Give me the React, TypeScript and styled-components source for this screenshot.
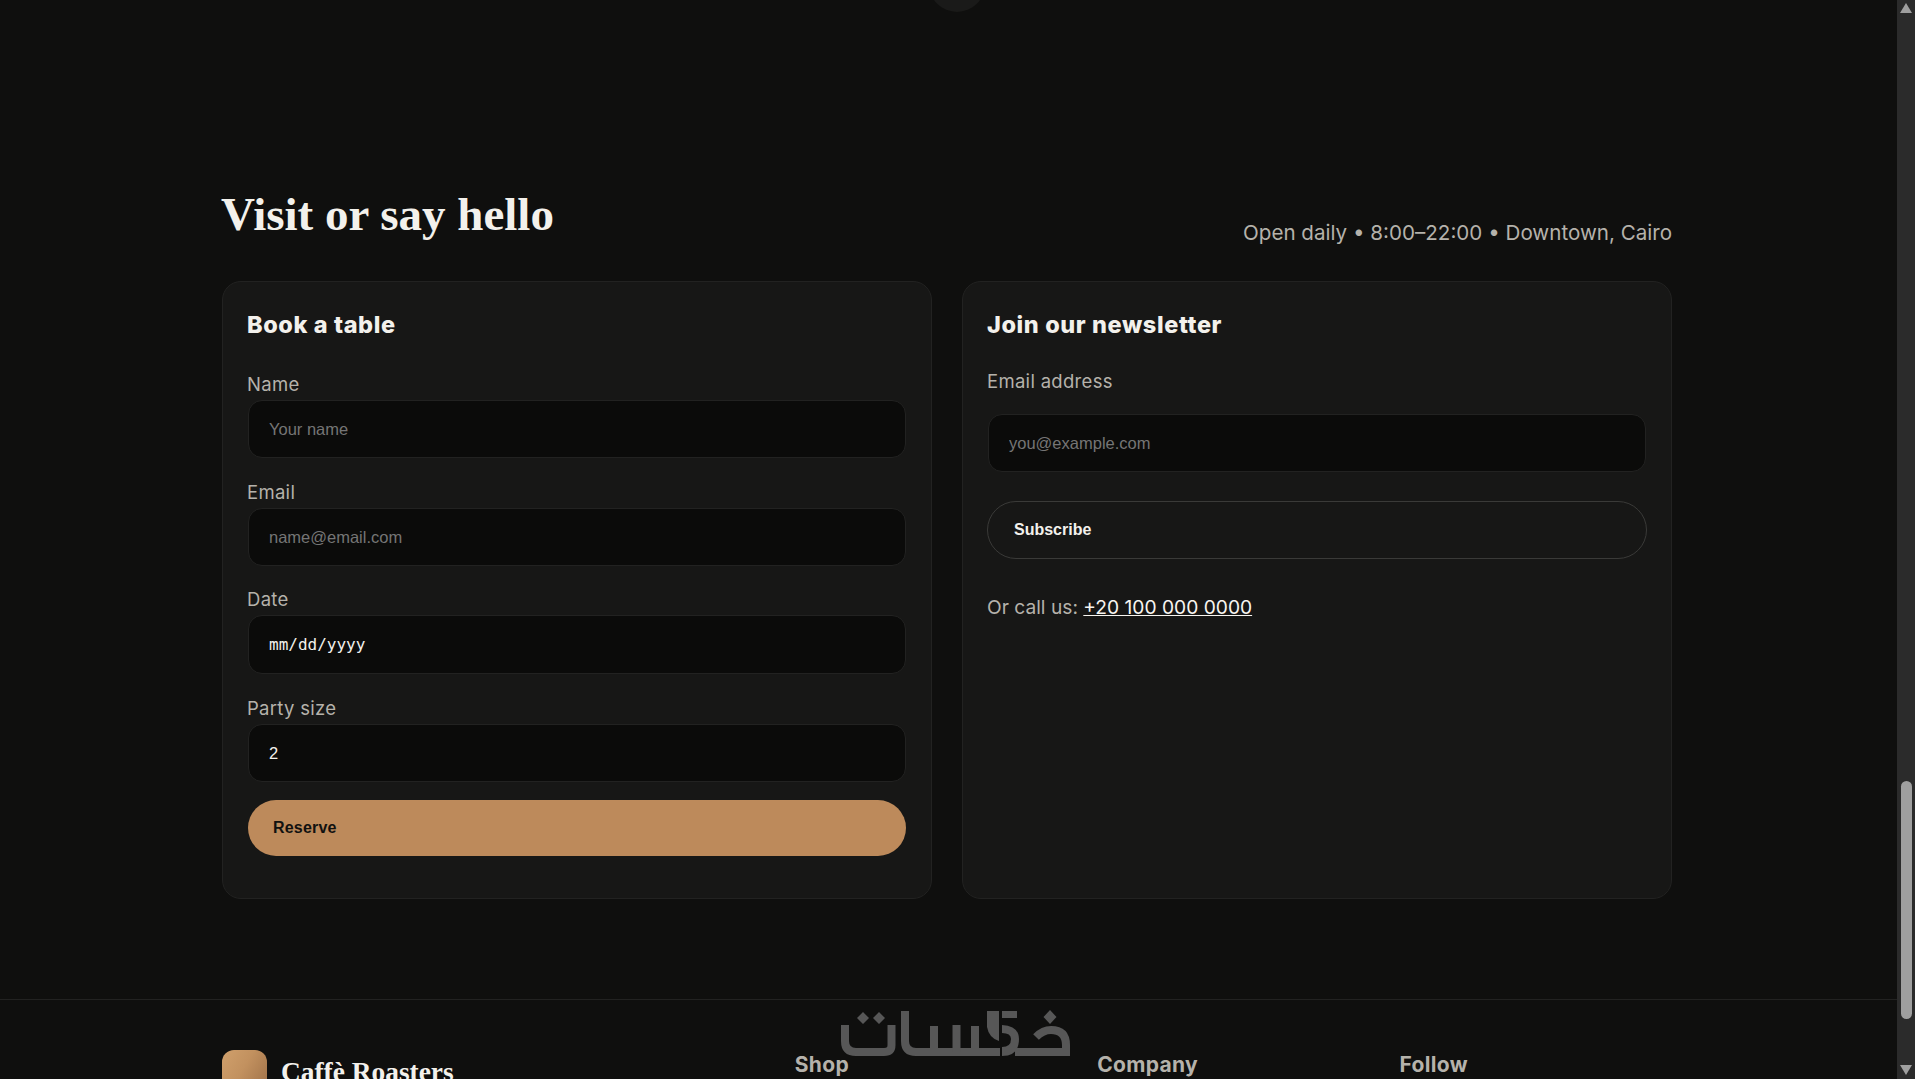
import React from "react";
import styled, { createGlobalStyle } from "styled-components";

const Global = createGlobalStyle`
  html, body { margin: 0; padding: 0; height: 100%; overflow: hidden; background: #0f0f0e; }
  * { box-sizing: border-box; }
  #root { height: 100%; }
  input::placeholder { color: #757575; opacity: 1; }
`;

const Shell = styled.div`
  display: flex;
  height: 1079px;
  overflow: hidden;
  background: #0f0f0e;
  position: relative;
`;
const Page = styled.main`
  flex: 1;
  min-width: 0;
  display: flex;
  flex-direction: column;
  font-family: Inter, "Noto Sans", sans-serif;
  color: #f3f1ec;
`;
const Peek = styled.div`
  flex: none;
  height: 12px;
  overflow: hidden;
  display: flex;
  justify-content: center;
  align-items: flex-end;
  padding-left: 16px;
`;
const PeekCircle = styled.div`
  width: 56px;
  height: 56px;
  flex: none;
  border-radius: 50%;
  background: #1a1a19;
`;
const Section = styled.section`
  flex: none;
  padding: 174px 225px 0 222px;
  display: flex;
  flex-direction: column;
`;
const Head = styled.header`
  display: flex;
  justify-content: space-between;
  align-items: flex-end;
  height: 95px;
  padding-bottom: 33px;
`;
const Title = styled.h2`
  margin: 0 0 6px -1px;
  font-family: "Liberation Serif", "DejaVu Serif", serif;
  font-weight: 700;
  font-size: 47px;
  line-height: 56px;
  color: #f3f1ec;
`;
const Hours = styled.p`
  margin: 0;
  font-size: 20.6px;
  line-height: 30px;
  color: #b5b2ab;
`;
const Cards = styled.div`
  display: grid;
  grid-template-columns: 1fr 1fr;
  gap: 30px;
`;
const Card = styled.div`
  height: 618px;
  padding: 26px 25px;
  background: #171716;
  border: 1px solid #222221;
  border-radius: 19px;
  display: flex;
  flex-direction: column;
`;
const CardTitle = styled.h3`
  margin: 0 0 0 -1px;
  font-size: 23.5px;
  font-weight: 800;
  letter-spacing: 0.6px;
  line-height: 34px;
  color: #f3f1ec;
`;
const Label = styled.label<{ $mt: number; $mb: number }>`
  display: block;
  margin-top: ${(p) => p.$mt}px;
  margin-bottom: ${(p) => p.$mb}px;
  margin-left: -1px;
  font-size: 18.5px;
  letter-spacing: 0.3px;
  line-height: 26px;
  color: #b5b2ab;
`;
const Input = styled.input`
  display: block;
  flex: none;
  width: 100%;
  height: 58px;
  padding: 0 20px;
  background: #0b0b0a;
  border: 1px solid #222221;
  border-radius: 14px;
  color: #f3f1ec;
  font-family: "Liberation Sans", Arial, sans-serif;
  font-size: 16.5px;
  outline: none;
`;
const DateField = styled.div`
  flex: none;
  height: 59px;
  padding: 0 20px;
  display: flex;
  align-items: center;
  background: #0b0b0a;
  border: 1px solid #222221;
  border-radius: 14px;
  color: #f3f1ec;
  font-family: "DejaVu Sans Mono", "Liberation Mono", monospace;
  font-size: 16px;
`;
const Primary = styled.button`
  flex: none;
  margin-top: 18px;
  height: 56px;
  padding: 0 25px;
  border: 0;
  border-radius: 28px;
  background: #bd8a5b;
  color: #111110;
  font-family: "Liberation Sans", Arial, sans-serif;
  font-size: 16px;
  font-weight: 700;
  letter-spacing: 0.2px;
  text-align: left;
`;
const Ghost = styled.button`
  flex: none;
  margin: 29px -1px 0;
  height: 58px;
  padding: 0 26px;
  border: 1px solid #3a3a38;
  border-radius: 29px;
  background: transparent;
  color: #f3f1ec;
  font-family: "Liberation Sans", Arial, sans-serif;
  font-size: 16px;
  font-weight: 700;
  text-align: left;
`;
const Call = styled.p`
  margin: 34px 0 0 -1px;
  font-size: 19.2px;
  line-height: 28px;
  color: #b5b2ab;
`;
const Phone = styled.a`
  color: #f7f5f0;
  text-decoration: underline;
`;
const Footer = styled.footer`
  flex: none;
  margin-top: 100px;
  border-top: 1px solid #222221;
  padding: 50px 227px 0 222px;
  display: grid;
  grid-template-columns: 2fr 1fr 1fr 1fr;
  gap: 32px;
`;
const Brand = styled.div`
  display: flex;
  align-items: center;
  gap: 14px;
`;
const BrandMark = styled.div`
  width: 45px;
  height: 45px;
  flex: none;
  border-radius: 12px;
  background: linear-gradient(120deg, #d0a06c 0%, #c2915f 45%, #9c6e46 100%);
`;
const BrandName = styled.span`
  font-family: "Liberation Serif", serif;
  font-weight: 700;
  font-size: 27.4px;
  color: #f3f1ec;
`;
const FootHead = styled.h4`
  margin: 0;
  font-size: 21px;
  letter-spacing: 0.3px;
  line-height: 30px;
  font-weight: 700;
  color: #b5b2ab;
`;
const Watermark = styled.svg`
  position: absolute;
  left: 840px;
  top: 1005px;
  width: 240px;
  height: 60px;
`;
const Scrollbar = styled.aside`
  width: 18px;
  flex: none;
  background: #2b2b2b;
  display: flex;
  flex-direction: column;
  align-items: center;
`;
const Arrow = styled.div<{ $down?: boolean }>`
  width: 0;
  height: 0;
  flex: none;
  border-left: 6px solid transparent;
  border-right: 6px solid transparent;
  ${(p) => (p.$down ? "border-top: 10px solid #9f9f9f;" : "border-bottom: 10px solid #9f9f9f;")}
  margin-top: ${(p) => (p.$down ? "46px" : "3px")};
`;
const Thumb = styled.div`
  width: 11px;
  height: 238px;
  flex: none;
  margin-top: 768px;
  border-radius: 6px;
  background: #9f9f9f;
`;

export default function App() {
  return (
    <Shell>
      <Global />
      <Page>
        <Peek>
          <PeekCircle />
        </Peek>
        <Section>
          <Head>
            <Title>Visit or say hello</Title>
            <Hours>Open daily • 8:00–22:00 • Downtown, Cairo</Hours>
          </Head>
          <Cards>
            <Card>
              <CardTitle>Book a table</CardTitle>
              <Label $mt={29} $mb={3}>Name</Label>
              <Input placeholder="Your name" />
              <Label $mt={21} $mb={3}>Email</Label>
              <Input placeholder="name@email.com" />
              <Label $mt={20} $mb={3}>Date</Label>
              <DateField>mm/dd/yyyy</DateField>
              <Label $mt={21} $mb={3}>Party size</Label>
              <Input defaultValue="2" />
              <Primary>Reserve</Primary>
            </Card>
            <Card>
              <CardTitle>Join our newsletter</CardTitle>
              <Label $mt={26} $mb={20}>Email address</Label>
              <Input placeholder="you@example.com" />
              <Ghost>Subscribe</Ghost>
              <Call>
                Or call us: <Phone href="#">+20 100 000 0000</Phone>
              </Call>
            </Card>
          </Cards>
        </Section>
        <Footer>
          <Brand>
            <BrandMark />
            <BrandName>Caffè Roasters</BrandName>
          </Brand>
          <FootHead>Shop</FootHead>
          <FootHead>Company</FootHead>
          <FootHead>Follow</FootHead>
        </Footer>
      </Page>
      <Scrollbar>
        <Arrow />
        <Thumb />
        <Arrow $down />
      </Scrollbar>
      <Watermark viewBox="0 0 240 60" aria-hidden="true">
        <g fill="none" stroke="#575757" strokeWidth="8">
          <path d="M5 20 V36 Q5 47 16 47 H44 Q51.5 47 51.5 40 V20" />
          <path d="M65 6 V36 Q65 47 76 47 H160" />
          <path d="M94 21 V47 M116.5 20 V47 M135 21 V47" />
          <path d="M175 47 H226 V40 Q226 25 211 25 Q203 25 196 32" />
        </g>
        <g fill="#575757">
          <path d="M23 7 L29 13 L23 19 L17 13 Z M39 7 L45 13 L39 19 L33 13 Z M210 5 L216.5 12 L210 19 L203.5 12 Z" />
          <path d="M147 6 H159 V36 Q149 33 147 22 Z" />
          <path d="M162 6 H177 V13 H162 Z" />
          <path d="M162 20 Q179 21 179 34 Q179 51 162 51 V42 Q171 42 171 34 Q171 28 162 28 Z" />
        </g>
      </Watermark>
    </Shell>
  );
}
